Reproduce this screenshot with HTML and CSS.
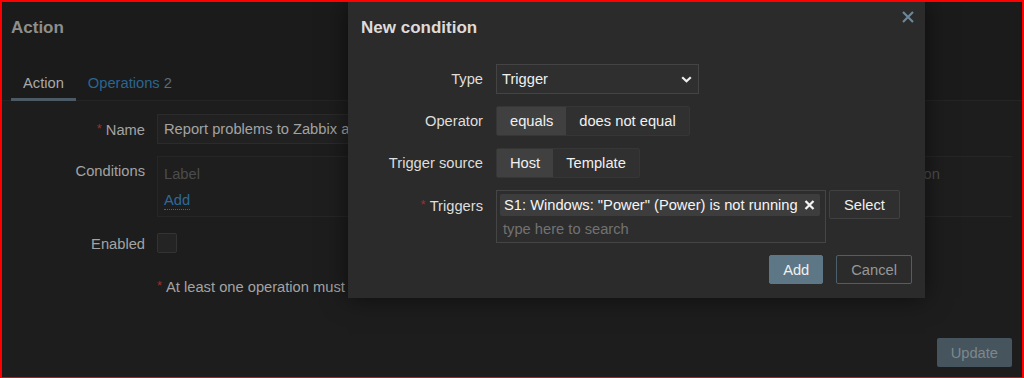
FILE: index.html
```html
<!DOCTYPE html>
<html lang="en">
<head>
<meta charset="utf-8">
<title>Action</title>
<link rel="stylesheet" href="styles.css">
</head>
<body>
<div class="frame">
  <div class="top">
    <h1 class="page-title">Action</h1>
    <nav class="tabs">
      <a class="tab tab-active">Action</a>
      <a class="tab tab-link">Operations <span class="tab-count">2</span></a>
    </nav>
  </div>

  <div class="form">
    <div class="f-label"><span class="req">*</span>Name</div>
    <div class="f-control"><div class="text-input">Report problems to Zabbix administrators</div></div>

    <div class="f-label">Conditions</div>
    <div class="f-control">
      <div class="cond-box">
        <div class="cond-head">
          <span>Label</span><span></span><span>Action</span>
        </div>
        <a class="link-add">Add</a>
      </div>
    </div>

    <div class="f-label">Enabled</div>
    <div class="f-control"><span class="checkbox"></span></div>

    <div class="f-label"></div>
    <div class="f-control note"><span class="req">*</span>At least one operation must exist.</div>
  </div>

  <div class="page-footer">
    <button class="btn-update">Update</button>
  </div>

  <div class="modal">
    <h2 class="modal-title">New condition</h2>
    <span class="modal-close">
      <svg width="12" height="12" viewBox="0 0 12 12"><path d="M1 1L11 11M11 1L1 11" stroke="#6c8799" stroke-width="2.2" fill="none"/></svg>
    </span>

    <div class="m-form">
      <div class="m-label">Type</div>
      <div class="m-control">
        <div class="select">
          <span>Trigger</span>
          <svg width="11" height="7" viewBox="0 0 11 7"><path d="M1.2 1.2L5.5 5.3L9.8 1.2" stroke="#eeeeee" stroke-width="2.2" fill="none"/></svg>
        </div>
      </div>

      <div class="m-label">Operator</div>
      <div class="m-control">
        <div class="radio">
          <span class="seg seg-on">equals</span><span class="seg">does not equal</span>
        </div>
      </div>

      <div class="m-label">Trigger source</div>
      <div class="m-control">
        <div class="radio">
          <span class="seg seg-on">Host</span><span class="seg">Template</span>
        </div>
      </div>

      <div class="m-label"><span class="req">*</span>Triggers</div>
      <div class="m-control trig-row">
        <div class="multiselect">
          <span class="chip">S1: Windows: "Power" (Power) is not running
            <svg width="11" height="10" viewBox="0 0 11 10"><path d="M1.5 1L9.5 9M9.5 1L1.5 9" stroke="#f2f2f2" stroke-width="2.3" fill="none"/></svg>
          </span>
          <div class="ms-placeholder">type here to search</div>
        </div>
        <button class="btn-select">Select</button>
      </div>
    </div>

    <div class="m-footer">
      <button class="btn-add">Add</button>
      <button class="btn-cancel">Cancel</button>
    </div>
  </div>
</div>
</body>
</html>
```

FILE: styles.css
```css
html, body {
  margin: 0;
  padding: 0;
  background: #1d1d1d;
}

body {
  font-family: "Liberation Sans", Arial, sans-serif;
  font-size: 14.7px;
}

.frame {
  position: relative;
  box-sizing: border-box;
  width: 1024px;
  height: 378px;
  border: 2px solid #ff0000;
  border-bottom-width: 1px;
  background: #1d1d1d;
  overflow: hidden;
  display: flex;
  flex-direction: column;
  padding: 0 10px 0 9px;
}

.top {
  margin: 0 -10px 0 -9px;
  padding: 0 10px 0 9px;
  background: #1b1b1b;
  border-bottom: 1px solid #242424;
}

.page-title {
  margin: 0 0 30px;
  padding-top: 16px;
  font-size: 17px;
  line-height: 20px;
  font-weight: bold;
  color: #8e8e8e;
}

.tabs {
  display: flex;
  margin-top: -1px;
}

.tab {
  display: block;
  padding: 7px 12px 6px;
  line-height: 18px;
  border-bottom: 3px solid transparent;
  color: #a9a9a9;
  margin-bottom: -1px;
}

.tab-active {
  border-bottom-color: #4b5a64;
}

.tab-link {
  color: #2c6590;
}

.tab-count {
  color: #5a6c79;
}

.form {
  display: grid;
  grid-template-columns: 134px 1fr;
  column-gap: 12px;
  row-gap: 12px;
  padding-top: 13px;
  color: #a3a3a3;
}

.f-label {
  text-align: right;
  padding-top: 6px;
  line-height: 18px;
  color: #a3a3a3;
}

.req {
  color: #9c2f2f;
  font-size: 13px;
  margin-right: 4px;
  vertical-align: 2px;
}

.text-input {
  box-sizing: border-box;
  width: 560px;
  height: 30px;
  line-height: 28px;
  padding: 0 6px;
  border: 1px solid #2b2b2b;
  background: #212121;
  color: #a3a3a3;
  white-space: nowrap;
  overflow: hidden;
}

.cond-box {
  border: 1px solid #262626;
  border-right-color: transparent;
  background: #1e1e1e;
  padding: 8px 6px 6px;
}

.cond-head {
  display: grid;
  grid-template-columns: 300px 1fr 106px;
  line-height: 18px;
  color: #4c4c4c;
}

.link-add {
  display: inline-block;
  margin-top: 8px;
  line-height: 18px;
  color: #2d6a9a;
  border-bottom: 1px dotted #2d6a9a;
}

.checkbox {
  display: block;
  box-sizing: border-box;
  width: 20px;
  height: 20px;
  margin-top: 4px;
  border: 1px solid #333333;
  border-radius: 2px;
  background: #242424;
}

.note {
  padding-top: 12px;
  line-height: 18px;
  color: #a3a3a3;
}

.page-footer {
  margin-top: auto;
  display: flex;
  justify-content: flex-end;
  padding-bottom: 10px;
}

.btn-update {
  height: 29px;
  padding: 0 14px;
  border: none;
  border-radius: 2px;
  background: #46545d;
  color: #7d888e;
  font: inherit;
}

/* modal */
.modal {
  position: absolute;
  left: 346px;
  top: -2px;
  box-sizing: border-box;
  width: 577px;
  padding: 17px 13px 14px;
  background: #2b2b2b;
  box-shadow: 0 0 24px rgba(0, 0, 0, 0.55);
}

.modal-title {
  margin: 0;
  padding-top: 1px;
  font-size: 17px;
  line-height: 20px;
  font-weight: bold;
  color: #dcdcdc;
}

.modal-close {
  position: absolute;
  top: 11px;
  right: 11px;
  width: 12px;
  height: 12px;
  display: block;
  line-height: 0;
}

.m-form {
  display: grid;
  grid-template-columns: 122px 1fr;
  column-gap: 13px;
  row-gap: 12px;
  margin-top: 26px;
}

.m-label {
  text-align: right;
  line-height: 30px;
  color: #dedede;
  white-space: nowrap;
}

.m-control {
  display: flex;
  align-items: flex-start;
}

.select {
  box-sizing: border-box;
  width: 203px;
  height: 30px;
  display: flex;
  align-items: center;
  justify-content: space-between;
  padding: 0 6px 0 5px;
  border: 1px solid #444444;
  background: #2f2f2f;
  color: #f0f0f0;
}

.radio {
  display: inline-flex;
  box-sizing: border-box;
  height: 30px;
  border: 1px solid #363636;
  border-radius: 2px;
  background: #303030;
  overflow: hidden;
}

.seg {
  padding: 0 13px;
  line-height: 28px;
  color: #f0f0f0;
  background: #303030;
}

.seg-on {
  background: #404040;
}

.trig-row {
  gap: 3px;
}

.multiselect {
  box-sizing: border-box;
  width: 330px;
  height: 53px;
  padding: 3px;
  border: 1px solid #454545;
  background: #2d2d2d;
}

.chip {
  display: inline-flex;
  align-items: center;
  gap: 6px;
  height: 22px;
  padding: 0 5px 0 4px;
  border-radius: 2px;
  background: #3d3d3d;
  color: #f5f5f5;
  white-space: nowrap;
}

.ms-placeholder {
  margin-top: 4px;
  padding-left: 3px;
  line-height: 18px;
  color: #727272;
}

.btn-select {
  box-sizing: border-box;
  height: 29px;
  padding: 0 14px;
  border: 1px solid #414141;
  border-radius: 2px;
  background: #2f2f2f;
  color: #f0f0f0;
  font: inherit;
}

.m-footer {
  display: flex;
  justify-content: flex-end;
  gap: 13px;
  margin-top: 12px;
}

.btn-add,
.btn-cancel {
  box-sizing: border-box;
  height: 29px;
  padding: 0 14px;
  border-radius: 2px;
  font: inherit;
}

.btn-add {
  padding: 0 13px;
  border: 1px solid #5d7787;
  background: #5d7787;
  color: #f0f0f0;
}

.btn-cancel {
  border: 1px solid #4d5f6b;
  background: transparent;
  color: #979797;
}
```
